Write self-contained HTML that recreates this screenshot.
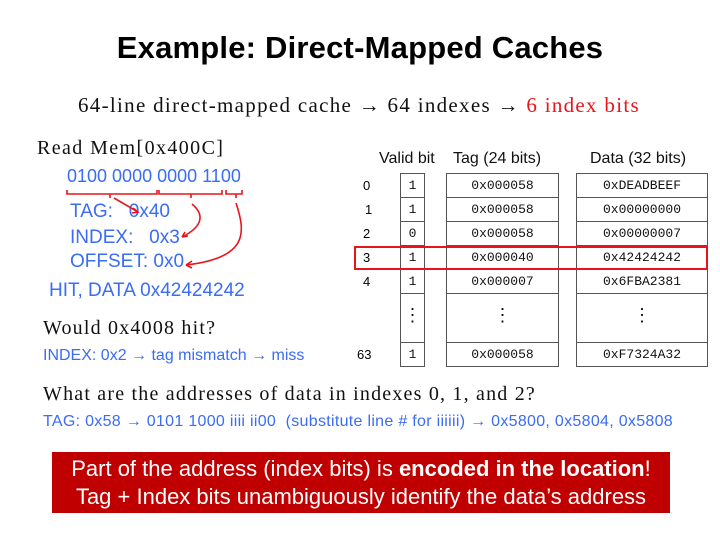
<!DOCTYPE html>
<html><head><meta charset="utf-8"><style>
body{margin:0;width:720px;height:540px;background:#fff;position:relative;overflow:hidden;font-family:"Liberation Sans",sans-serif}
.a{position:absolute;white-space:nowrap}
.serif{font-family:"Liberation Serif",serif;color:#111}
.b{color:#3a6cf4}
.mono{font-family:"Liberation Mono",monospace;font-size:13px;color:#111}
.cell{position:absolute;border:1.5px solid #555;box-sizing:border-box;text-align:center;line-height:23px}
</style></head><body>
<div class="a" style="left:0;width:720px;text-align:center;top:30px;font-size:31px;font-weight:bold;color:#000;letter-spacing:0.2px">Example: Direct-Mapped Caches</div>
<div class="a serif" style="left:78px;top:93px;font-size:21px;letter-spacing:1.3px">64-line direct-mapped cache → 64 indexes → <span style="color:#e8141b">6 index bits</span></div>
<div class="a serif" style="left:37px;top:137px;font-size:20px;letter-spacing:1.4px">Read Mem[0x400C]</div>
<div class="a b" style="left:67px;top:166px;font-size:18px">0100 0000 0000 1100</div>
<div class="a b" style="left:70px;top:201px;font-size:19px">TAG:&nbsp;&nbsp;&nbsp;0x40</div>
<div class="a b" style="left:70px;top:227px;font-size:19px">INDEX:&nbsp;&nbsp;&nbsp;0x3</div>
<div class="a b" style="left:70px;top:251px;font-size:19px">OFFSET: 0x0</div>
<div class="a b" style="left:49px;top:280px;font-size:19px">HIT, DATA 0x42424242</div>
<svg class="a" style="left:0;top:0" width="360" height="300" fill="none" stroke="#e8141b" stroke-width="1.6">
<path d="M67 190v4h90v-4M110 194v4M159 190v4h63v-4M191 194v4M226 190v4h16v-4M236 194v4"/>
<path d="M114 198l24 14M133 208l5 4-6 1"/>
<path d="M192 204c12 10 12 22-10 33M182 237l6-1M182 237l3-5"/>
<path d="M236 203c10 30 12 55-50 62M186 265l6-4M186 265l6 3"/>
</svg>
<div class="a serif" style="left:43px;top:317px;font-size:20px;letter-spacing:1.2px">Would 0x4008 hit?</div>
<div class="a b" style="left:43px;top:347px;font-size:16px">INDEX: 0x2 → tag mismatch → miss</div>
<div class="a" style="left:379px;top:150px;font-size:16px;color:#111">Valid bit</div>
<div class="a" style="left:453px;top:150px;font-size:16px;color:#111">Tag (24 bits)</div>
<div class="a" style="left:590px;top:150px;font-size:16px;color:#111">Data (32 bits)</div>
<div class="a" style="left:363px;top:178px;font-size:13px">0</div>
<div class="a" style="left:365px;top:202px;font-size:13px">1</div>
<div class="a" style="left:363px;top:226px;font-size:13px">2</div>
<div class="a" style="left:363px;top:250px;font-size:13px">3</div>
<div class="a" style="left:363px;top:274px;font-size:13px">4</div>
<div class="a" style="left:357px;top:347px;font-size:13px">63</div>
<div class="mono">
<div class="cell" style="left:400px;top:173px;width:25px;height:25px">1</div>
<div class="cell" style="left:400px;top:197px;width:25px;height:25px">1</div>
<div class="cell" style="left:400px;top:221px;width:25px;height:25px">0</div>
<div class="cell" style="left:400px;top:245px;width:25px;height:25px">1</div>
<div class="cell" style="left:400px;top:269px;width:25px;height:25px">1</div>
<div class="cell" style="left:400px;top:293px;width:25px;height:50px;line-height:46px;font-size:18px">⋮</div>
<div class="cell" style="left:400px;top:342px;width:25px;height:25px">1</div>
<div class="cell" style="left:446px;top:173px;width:113px;height:25px">0x000058</div>
<div class="cell" style="left:446px;top:197px;width:113px;height:25px">0x000058</div>
<div class="cell" style="left:446px;top:221px;width:113px;height:25px">0x000058</div>
<div class="cell" style="left:446px;top:245px;width:113px;height:25px">0x000040</div>
<div class="cell" style="left:446px;top:269px;width:113px;height:25px">0x000007</div>
<div class="cell" style="left:446px;top:293px;width:113px;height:50px;line-height:46px;font-size:18px">⋮</div>
<div class="cell" style="left:446px;top:342px;width:113px;height:25px">0x000058</div>
<div class="cell" style="left:576px;top:173px;width:132px;height:25px">0xDEADBEEF</div>
<div class="cell" style="left:576px;top:197px;width:132px;height:25px">0x00000000</div>
<div class="cell" style="left:576px;top:221px;width:132px;height:25px">0x00000007</div>
<div class="cell" style="left:576px;top:245px;width:132px;height:25px">0x42424242</div>
<div class="cell" style="left:576px;top:269px;width:132px;height:25px">0x6FBA2381</div>
<div class="cell" style="left:576px;top:293px;width:132px;height:50px;line-height:46px;font-size:18px">⋮</div>
<div class="cell" style="left:576px;top:342px;width:132px;height:25px">0xF7324A32</div>
</div>
<div class="a" style="left:354px;top:246px;width:354px;height:24px;border:2px solid #e8141b;box-sizing:border-box"></div>
<div class="a serif" style="left:43px;top:383px;font-size:20px;letter-spacing:1.2px">What are the addresses of data in indexes 0, 1, and 2?</div>
<div class="a b" style="left:43px;top:413px;font-size:16px;letter-spacing:0.3px">TAG: 0x58 → 0101 1000 iiii ii00&nbsp; (substitute line # for iiiiii) → 0x5800, 0x5804, 0x5808</div>
<div class="a" style="left:52px;top:452px;width:618px;height:61px;background:#c00000;color:#fff;text-align:center;font-size:22px;line-height:28px;padding-top:3px;box-sizing:border-box">Part of the address (index bits) is <b>encoded in the location</b>!<br>Tag + Index bits unambiguously identify the data’s address</div>
</body></html>
